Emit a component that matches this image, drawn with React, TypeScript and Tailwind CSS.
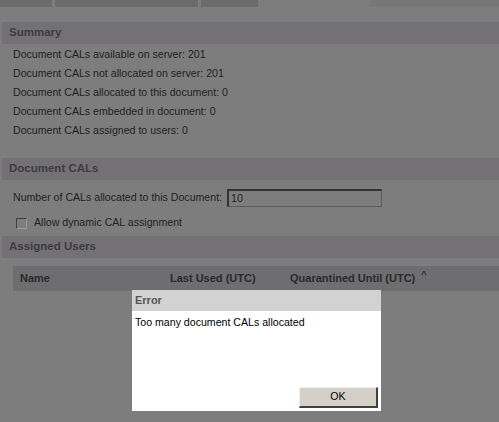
export default function App() {
  const summary = [
    "Document CALs available on server: 201",
    "Document CALs not allocated on server: 201",
    "Document CALs allocated to this document: 0",
    "Document CALs embedded in document: 0",
    "Document CALs assigned to users: 0",
  ]

  return (
    <div className="relative w-[499px] h-[422px] overflow-hidden bg-[#7d7d7d] text-[10.6px] text-[#1f1f1f] font-['Liberation_Sans',Arial,sans-serif]">
      {/* Tabs strip */}
      <div className="flex h-[7px]">
        <div className="w-[52px] bg-[#6b6b6b]" />
        <div className="w-[3px]" />
        <div className="w-[143px] bg-[#6b6b6b]" />
        <div className="w-[3px]" />
        <div className="w-[57px] bg-[#6b6b6b]" />
        <div className="w-[112px]" />
        <div className="flex-1 bg-[#777777]" />
      </div>

      {/* Summary */}
      <div className="mt-[15px] ml-[2px] h-[22px] flex items-center pl-[7px] bg-[#737175] font-bold text-[11.5px] text-[#3c3c3c]">
        Summary
      </div>
      <div className="pl-[13px] pt-[1px]">
        {summary.map((s) => (
          <div key={s} className="h-[19px] flex items-center">
            {s}
          </div>
        ))}
      </div>

      {/* Document CALs */}
      <div className="mt-[18px] ml-[2px] h-[22px] flex items-center pl-[7px] bg-[#737175] font-bold text-[11.5px] text-[#3c3c3c]">
        Document CALs
      </div>
      <div className="mt-[9px] pl-[13px] flex items-center h-[18px]">
        <span>Number of CALs allocated to this Document:</span>
        <div className="ml-[5px] w-[155px] h-[18px] flex items-center pl-[2px] border-t-2 border-l-2 border-t-[#333333] border-l-[#333333] border-r border-b border-r-[#5a5a5a] border-b-[#5a5a5a]">
          10
        </div>
      </div>
      <div className="mt-[10px] pl-[16px] flex items-center h-[12px]">
        <div className="w-[11px] h-[11px] border border-t-[#3e3e3e] border-l-[#3e3e3e] border-r-[#9a9a9a] border-b-[#9a9a9a]" />
        <span className="ml-[7px]">Allow dynamic CAL assignment</span>
      </div>

      {/* Assigned Users */}
      <div className="mt-[7px] ml-[2px] h-[22px] flex items-center pl-[7px] bg-[#737175] font-bold text-[11.5px] text-[#3c3c3c]">
        Assigned Users
      </div>
      <div className="mt-[8px] ml-[13px] h-[25px] flex items-center bg-[#6e6d70] font-bold text-[11px] text-[#2a2a2a]">
        <span className="ml-[7px] w-[150px]">Name</span>
        <span className="w-[120px]">Last Used (UTC)</span>
        <span>Quarantined Until (UTC)</span>
        <span className="ml-[6px] -mt-[8px] text-[9px]">^</span>
      </div>

      {/* Error dialog */}
      <div className="absolute left-[132px] top-[290px] w-[249px] h-[121px] bg-white flex flex-col">
        <div className="h-[21px] bg-[#d2d2d2] flex items-center pl-[3px] font-bold text-[11px] text-[#555555]">
          Error
        </div>
        <div className="pl-[3px] pt-[4px] text-black">Too many document CALs allocated</div>
        <div className="mt-auto mb-[3px] mr-[3px] self-end w-[79px] h-[21px] bg-[#d4d0c8] flex items-center justify-center text-black border-r-2 border-b-2 border-r-[#404040] border-b-[#404040] border-t border-l border-t-[#f0f0f0] border-l-[#f0f0f0]">
          OK
        </div>
      </div>
    </div>
  )
}
